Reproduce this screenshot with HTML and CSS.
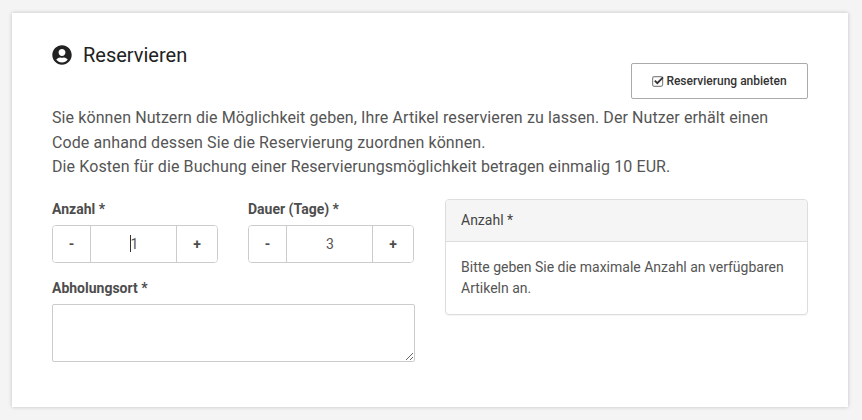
FILE: index.html
```html
<!DOCTYPE html>
<html lang="de">
<head>
<meta charset="utf-8">
<title>Reservieren</title>
<link rel="stylesheet" href="styles.css">
</head>
<body>
<main class="card">
  <div class="head">
    <h2 class="title">
      <svg class="user-icon" viewBox="0 0 496 512" width="20" height="20"><path fill="#222" d="M248 8C111 8 0 119 0 256s111 248 248 248 248-111 248-248S385 8 248 8zm0 96c48.600 0 88 39.400 88 88s-39.400 88-88 88-88-39.400-88-88 39.400-88 88-88zm0 344c-58.700 0-111.300-26.600-146.500-68.200 18.800-35.400 55.600-59.800 98.500-59.800 2.400 0 4.800.4 7.100 1.100 13 4.200 26.600 6.900 40.900 6.900 14.300 0 28-2.700 40.900-6.900 2.300-.7 4.700-1.100 7.100-1.100 42.900 0 79.700 24.400 98.500 59.800C359.300 421.400 306.700 448 248 448z"/></svg>
      <span>Reservieren</span>
    </h2>
    <button class="offer" type="button">
      <svg class="check-icon" viewBox="0 0 12 12" width="12" height="12"><rect x="0.600" y="1.600" width="10" height="9.800" rx="1.800" fill="none" stroke="#888" stroke-width="1.200"/><path d="M2.800 5.600l2.500 2.500 5.700-5.700" fill="none" stroke="#333" stroke-width="1.900"/></svg>
      Reservierung anbieten
    </button>
  </div>
  <p class="intro">Sie können Nutzern die Möglichkeit geben, Ihre Artikel reservieren zu lassen. Der Nutzer erhält einen Code anhand dessen Sie die Reservierung zuordnen können.<br>Die Kosten für die Buchung einer Reservierungsmöglichkeit betragen einmalig 10 EUR.</p>
  <div class="columns">
    <form class="form">
      <div class="counters">
        <div class="field">
          <label class="label">Anzahl *</label>
          <div class="stepper"><button class="step" type="button">-</button><span class="value"><i class="caret"></i>1</span><button class="step step-plus" type="button">+</button></div>
        </div>
        <div class="field">
          <label class="label">Dauer (Tage) *</label>
          <div class="stepper"><button class="step" type="button">-</button><span class="value">3</span><button class="step step-plus" type="button">+</button></div>
        </div>
      </div>
      <label class="label place">Abholungsort *</label>
      <textarea class="area"></textarea>
    </form>
    <aside class="panel">
      <div class="panel-head">Anzahl *</div>
      <div class="panel-body">Bitte geben Sie die maximale Anzahl an verfügbaren Artikeln an.</div>
    </aside>
  </div>
</main>
</body>
</html>
```
FILE: styles.css
```css
* { box-sizing: border-box; }
html, body { height: 100%; }
body {
  margin: 0;
  padding: 13px 14px 13px 12px;
  background: #f4f4f4;
  font-family: Roboto, "Liberation Sans", sans-serif;
  color: #555;
  overflow: hidden;
}
.card {
  width: 836px;
  height: 394px;
  background: #fff;
  box-shadow: 0 0 4px rgba(0,0,0,.22);
  padding: 30px 40px 0;
}
.head { display: flex; justify-content: space-between; align-items: flex-start; height: 63px; }
.title {
  margin: 0;
  display: flex;
  align-items: center;
  gap: 11px;
  font-size: 20px;
  font-weight: 400;
  line-height: 24px;
  color: #222;
}
.user-icon { display: block; }
.offer {
  margin-top: 20px;
  width: 177px;
  height: 36px;
  border: 1px solid #aaa;
  border-radius: 2px;
  background: #fff;
  font: 500 12px Roboto, sans-serif;
  color: #333;
  display: flex;
  align-items: center;
  justify-content: center;
  gap: 2px;
  padding: 0;
}
.check-icon { display: block; }
.intro { margin: 0; font-size: 16px; line-height: 24.500px; letter-spacing: .1px; }
.columns { display: flex; gap: 30px; margin-top: 19px; }
.form { width: 363px; flex: none; }
.counters { display: flex; gap: 30px; }
.field { width: 166px; }
.label { display: block; font-size: 14px; font-weight: 700; line-height: 20px; color: #4d4d4d; }
.stepper {
  margin-top: 6px;
  display: flex;
  height: 38px;
  border: 1px solid #ccc;
  border-radius: 4px;
  overflow: hidden;
}
.step {
  width: 37px;
  flex: none;
  border: 0;
  background: #fff;
  font: 700 14px Roboto, sans-serif;
  color: #4d4d4d;
  padding: 0;
}
.step-plus { width: 40px; }
.value {
  flex: 1;
  padding-left: 1px;
  border-left: 1px solid #ccc;
  border-right: 1px solid #ccc;
  display: flex;
  align-items: center;
  justify-content: center;
  font-size: 14px;
  color: #555;
}
.caret { width: 1px; height: 17px; background: #333; }
.place { margin-top: 15px; }
.area {
  display: block;
  width: 363px;
  height: 58px;
  margin-top: 6px;
  border: 1px solid #ccc;
  border-radius: 2px;
  background: #fff;
  outline: none;
}
.panel {
  width: 363px;
  height: 116px;
  border: 1px solid #ddd;
  border-radius: 4px;
  box-shadow: 0 1px 1px rgba(0,0,0,.05);
  font-size: 14px;
  overflow: hidden;
}
.panel-head {
  height: 42px;
  padding: 0 15px;
  line-height: 41px;
  background: #f5f5f5;
  border-bottom: 1px solid #ddd;
  color: #444;
}
.panel-body { padding: 15px; line-height: 21px; color: #555; }
```
